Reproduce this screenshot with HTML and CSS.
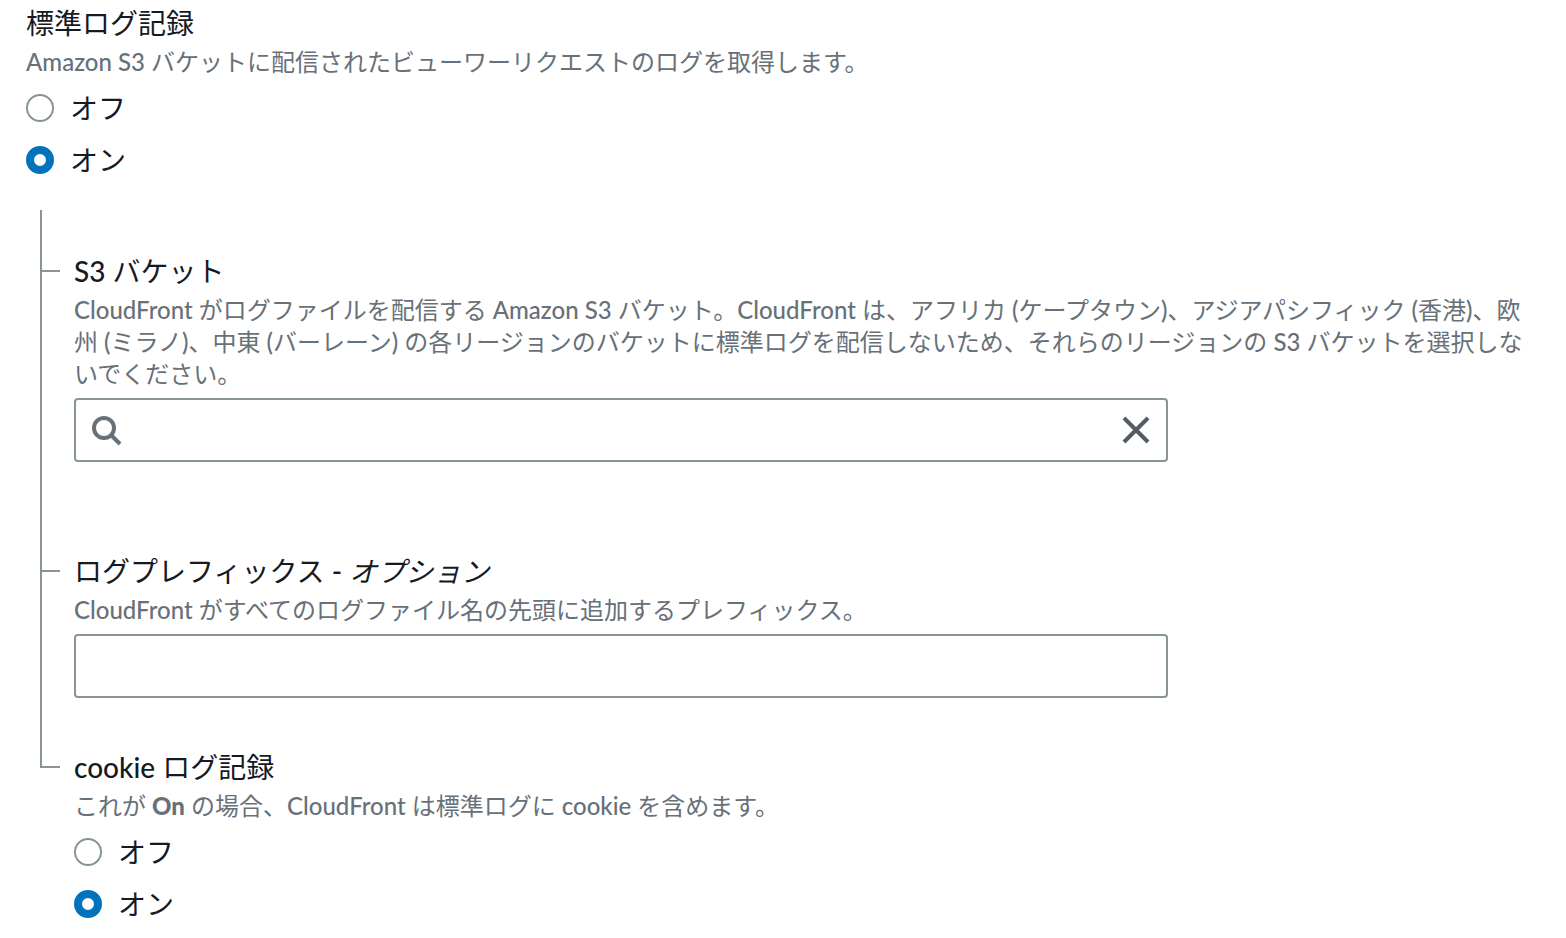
FILE: index.html
```html
<!DOCTYPE html>
<html lang="ja">
<head>
<meta charset="utf-8">
<meta name="viewport" content="width=device-width, initial-scale=1">
<title>標準ログ記録</title>
<link rel="stylesheet" href="styles.css">
</head>
<body>
<main class="page">
  <div class="field" role="radiogroup" aria-labelledby="logging-title" aria-describedby="logging-desc">
    <div class="title" id="logging-title">標準ログ記録</div>
    <p class="desc" id="logging-desc">Amazon S3 バケットに配信されたビューワーリクエストのログを取得します。</p>
    <div class="options">
      <label class="option"><input class="radio" type="radio" name="logging" value="off">オフ</label>
      <label class="option"><input class="radio" type="radio" name="logging" value="on" checked>オン</label>
    </div>
  </div>

  <div class="tree">
    <div class="node">
      <div class="branch"></div>
      <div class="field field-message">
        <label class="title" for="bucket">S3 バケット</label>
        <p class="desc" id="bucket-desc">CloudFront がログファイルを配信する Amazon S3 バケット。CloudFront は、アフリカ (ケープタウン)、アジアパシフィック (香港)、欧州 (ミラノ)、中東 (バーレーン) の各リージョンのバケットに標準ログを配信しないため、それらのリージョンの S3 バケットを選択しないでください。</p>
        <div class="control">
          <svg class="icon search" viewBox="0 0 32 32" aria-hidden="true"><circle cx="14" cy="14" r="10"/><path d="M21 21l9 9"/></svg>
          <input class="input" id="bucket" type="text" aria-describedby="bucket-desc">
          <button class="clear" type="button" aria-label="クリア"><svg class="icon" viewBox="0 0 32 32" aria-hidden="true"><path d="M4 4l24 24M28 4L4 28"/></svg></button>
        </div>
      </div>
    </div>
    <div class="node">
      <div class="branch"></div>
      <div class="field field-gap">
        <label class="title" for="prefix">ログプレフィックス - <i>オプション</i></label>
        <p class="desc" id="prefix-desc">CloudFront がすべてのログファイル名の先頭に追加するプレフィックス。</p>
        <div class="control">
          <input class="input" id="prefix" type="text" aria-describedby="prefix-desc">
        </div>
      </div>
    </div>
    <div class="node">
      <div class="branch"></div>
      <div class="field" role="radiogroup" aria-labelledby="cookie-title" aria-describedby="cookie-desc">
        <div class="title" id="cookie-title">cookie ログ記録</div>
        <p class="desc" id="cookie-desc">これが <b>On</b> の場合、CloudFront は標準ログに cookie を含めます。</p>
        <div class="options">
          <label class="option"><input class="radio" type="radio" name="cookie" value="off">オフ</label>
          <label class="option"><input class="radio" type="radio" name="cookie" value="on" checked>オン</label>
        </div>
      </div>
    </div>
  </div>
</main>
</body>
</html>
```
FILE: styles.css
```css
*,
*::before,
*::after {
  box-sizing: border-box;
}

body {
  margin: 0;
  background: #fff;
  color: #16191f;
  font: 400 28px/44px "Lato Medium", Lato, "Noto Sans CJK JP", sans-serif;
}

.page {
  padding: 2px 33px 12px 26px;
}

.title {
  display: block;
  margin-bottom: 2px;
  line-height: 42px;
}

.desc {
  margin: 0 0 8px;
  color: #687078;
  font-size: 24px;
  line-height: 32px;
}

.desc b {
  font-family: Lato, "Noto Sans CJK JP", sans-serif;
  font-weight: 900;
}

.options {
  display: flex;
  flex-direction: column;
  align-items: flex-start;
  gap: 8px;
}

.option {
  display: flex;
  align-items: center;
  gap: 16px;
}

.radio {
  appearance: none;
  width: 28px;
  height: 28px;
  margin: 0;
  border: 2px solid #879596;
  border-radius: 50%;
  background: #fff;
}

.radio:checked {
  border: 8px solid #0073bb;
}

.tree {
  margin: 28px 0 0 14px;
}

.node {
  display: flex;
  gap: 14px;
}

.branch {
  display: flex;
  flex-direction: column;
  flex: none;
  width: 20px;
}

.branch::before {
  content: "";
  height: 62px;
  border-left: 2px solid #879596;
  border-bottom: 2px solid #879596;
}

.node:not(:last-child) .branch::after {
  content: "";
  flex: 1;
  border-left: 2px solid #879596;
}

.node .field {
  flex: 1;
  min-width: 0;
  padding-top: 40px;
}

.node .field-message {
  padding-bottom: 48px;
}

.node .field-gap {
  padding-bottom: 8px;
}

.control {
  display: flex;
  align-items: center;
  width: 75%;
  height: 64px;
  padding: 0 14px;
  border: 2px solid #879596;
  border-radius: 4px;
}

.input {
  flex: 1;
  min-width: 0;
  height: 100%;
  padding: 0 8px;
  border: 0;
  outline: 0;
  background: none;
  color: inherit;
  font: inherit;
}

.icon {
  display: block;
  width: 32px;
  height: 32px;
  fill: none;
  stroke: #545b64;
  stroke-width: 4;
}

.search {
  stroke: #687078;
}

.clear {
  padding: 0;
  border: 0;
  background: none;
}
```
